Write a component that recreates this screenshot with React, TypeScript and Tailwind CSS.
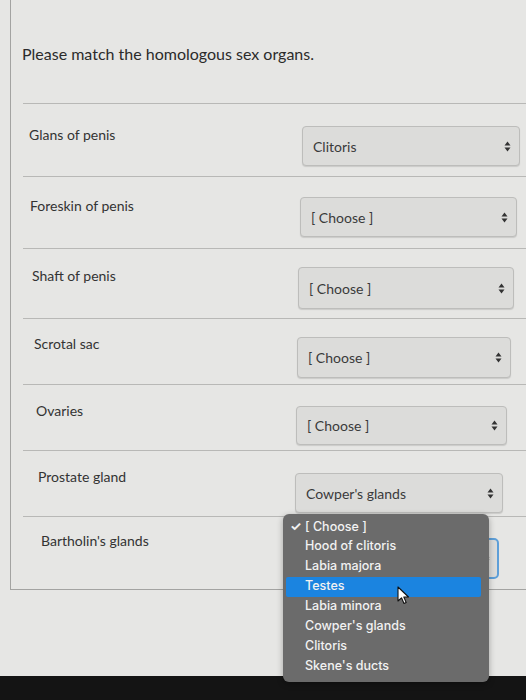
const rows = [
  { label: "Glans of penis", value: "Clitoris", h: "h-[73px]", lp: "pl-[6px] pt-[23px]", sel: "mt-[22px] mr-[6px] w-[218px] h-[40px]" },
  { label: "Foreskin of penis", value: "[ Choose ]", h: "h-[72px]", lp: "pl-[7px] pt-[21px]", sel: "mt-[20px] mr-[9px] w-[217px] h-[40px]" },
  { label: "Shaft of penis", value: "[ Choose ]", h: "h-[70px]", lp: "pl-[9px] pt-[19px]", sel: "mt-[18px] mr-[12px] w-[216px] h-[42px]" },
  { label: "Scrotal sac", value: "[ Choose ]", h: "h-[66px]", lp: "pl-[11px] pt-[17px]", sel: "mt-[18px] mr-[15px] w-[214px] h-[41px]" },
  { label: "Ovaries", value: "[ Choose ]", h: "h-[66px]", lp: "pl-[13px] pt-[18px]", sel: "mt-[21px] mr-[19px] w-[211px] h-[39px]" },
  { label: "Prostate gland", value: "Cowper's glands", h: "h-[66px]", lp: "pl-[15px] pt-[18px]", sel: "mt-[22px] mr-[23px] w-[208px] h-[40px]" },
];

const options = [
  "[ Choose ]",
  "Hood of clitoris",
  "Labia majora",
  "Testes",
  "Labia minora",
  "Cowper's glands",
  "Clitoris",
  "Skene's ducts",
];

function Arrows() {
  return (
    <svg width="7" height="11" viewBox="0 0 7 11" className="shrink-0">
      <path d="M3.5 0.5 L6.5 4.5 L0.5 4.5 Z" fill="#333" />
      <path d="M3.5 10.5 L6.5 6.5 L0.5 6.5 Z" fill="#333" />
    </svg>
  );
}

function Select({ value, className }: { value: string; className: string }) {
  return (
    <div
      className={`${className} flex items-center justify-between pl-[10px] pr-[8px] rounded-[4px] border border-[#bdbdbb] bg-[#dcdcda] shadow-[0_1px_1px_rgba(0,0,0,0.12)]`}
    >
      <span className="text-[14px] text-[#3a3a3a]">{value}</span>
      <Arrows />
    </div>
  );
}

export default function App() {
  return (
    <div className="relative w-[526px] h-[700px] overflow-hidden bg-[#e6e6e4] flex flex-col font-['Lato','Liberation_Sans',sans-serif]">
      <div className="h-[676px] pl-[10px]">
        <div className="h-[590px] border-l border-b border-[#a3a3a1]">
          <h1 className="pt-[44px] pl-[11px] text-[16px] leading-[20px] text-[#2b2b2b]">
            Please match the homologous sex organs.
          </h1>

          <div className="mt-[39px] pl-[12px]">
            {rows.map((r) => (
              <div key={r.label} className={`${r.h} flex items-start justify-between border-t border-[#b8b8b6]`}>
                <p className={`${r.lp} text-[14px] leading-[16px] text-[#333]`}>{r.label}</p>
                <Select value={r.value} className={r.sel} />
              </div>
            ))}

            {/* row with open select */}
            <div className="h-[73px] flex items-start justify-between border-t border-[#b8b8b6]">
              <p className="pl-[18px] pt-[16px] text-[14px] leading-[16px] text-[#333]">Bartholin's glands</p>
              <div className="mt-[21px] mr-[27px] w-[205px] h-[41px] flex items-center justify-end pr-[7px] rounded-[5px] border-2 border-[#5e9fd8] bg-[#dcdcda]">
                <Arrows />
              </div>
            </div>
          </div>
        </div>
      </div>

      <div className="h-[24px] bg-[#141414]" />

      {/* open dropdown menu */}
      <div className="absolute left-[283px] top-[514px] w-[206px] h-[168px] rounded-[6px] bg-[#6b6b6b] pt-[3px] font-['Inter','Liberation_Sans',sans-serif] font-medium text-[12.5px] text-[#f2f2f2] shadow-[0_2px_6px_rgba(0,0,0,0.3)]">
        {options.map((o, i) => (
          <div
            key={o}
            className={`h-[19.9px] flex items-center ml-[3px] mr-[8px] rounded-[2px] ${i === 3 ? "bg-[#1b84e0]" : ""}`}
          >
            <span className="w-[19px] pl-[4px] text-[13px] font-bold">{i === 0 ? "✓" : ""}</span>
            <span>{o}</span>
          </div>
        ))}
      </div>

      {/* mouse pointer */}
      <svg className="absolute left-[397px] top-[586px]" width="13" height="19" viewBox="0 0 13 19">
        <path d="M1 1 L1 15 L4.5 11.8 L7 17.5 L9.2 16.6 L6.8 11 L11.5 11 Z" fill="#fff" stroke="#111" strokeWidth="1.1" strokeLinejoin="round" />
      </svg>
    </div>
  );
}
